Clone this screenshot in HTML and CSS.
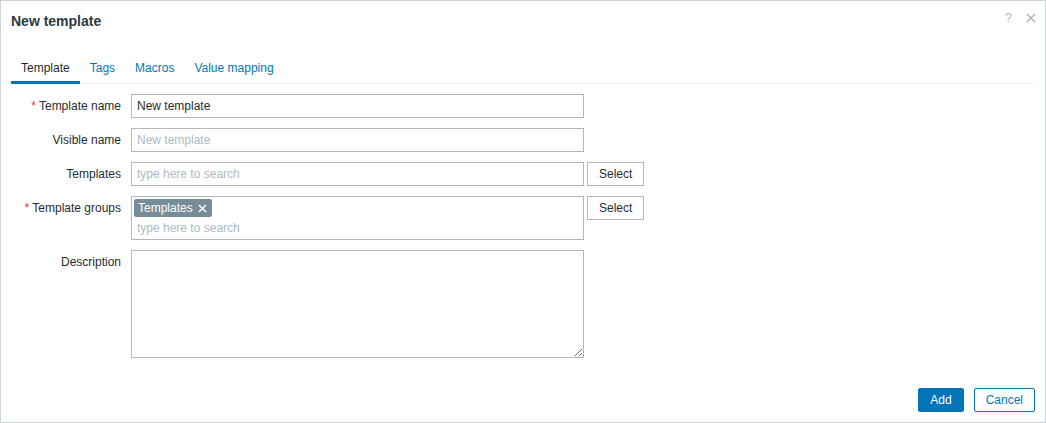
FILE: index.html
```html
<!DOCTYPE html>
<html>
<head>
<meta charset="utf-8">
<link rel="stylesheet" href="styles.css">
</head>
<body>
<div class="dialog">
  <div class="header">
    <h4 class="title">New template</h4>
    <div class="header-tools">
      <span class="help">?</span>
      <svg class="close" width="10" height="10" viewBox="0 0 10 10"><path d="M1 1L9 9M9 1L1 9" stroke="#acbbc2" stroke-width="1.6" fill="none"/></svg>
    </div>
  </div>
  <ul class="tabs">
    <li class="tab active">Template</li>
    <li class="tab">Tags</li>
    <li class="tab">Macros</li>
    <li class="tab">Value mapping</li>
  </ul>
  <div class="form">
    <label class="label required">Template name</label>
    <div class="field"><input class="text" type="text" value="New template"></div>

    <label class="label">Visible name</label>
    <div class="field"><input class="text" type="text" placeholder="New template"></div>

    <label class="label">Templates</label>
    <div class="field"><input class="text" type="text" placeholder="type here to search"><button class="btn-alt">Select</button></div>

    <label class="label required">Template groups</label>
    <div class="field">
      <div class="multiselect">
        <div class="selected">
          <span class="tag">Templates<svg width="9" height="9" viewBox="0 0 9 9"><path d="M1 1L8 8M8 1L1 8" stroke="#fff" stroke-width="1.5" fill="none"/></svg></span>
        </div>
        <input class="ms-input" type="text" placeholder="type here to search">
      </div>
      <button class="btn-alt">Select</button>
    </div>

    <label class="label">Description</label>
    <div class="field"><textarea class="textarea"></textarea></div>
  </div>
  <div class="footer">
    <button class="btn-primary">Add</button>
    <button class="btn-secondary">Cancel</button>
  </div>
</div>
</body>
</html>
```

FILE: styles.css
```css
html, body {
  margin: 0;
  padding: 0;
  background: #fff;
}

.dialog {
  box-sizing: border-box;
  width: 1046px;
  height: 423px;
  border: 1px solid #ccd5d9;
  display: flex;
  flex-direction: column;
  background: #fff;
  font-family: "Liberation Sans", Arial, sans-serif;
  font-size: 12px;
  color: #1f2c33;
}

.header {
  box-sizing: border-box;
  height: 54px;
  padding: 11px 10px 0 10px;
  display: flex;
  justify-content: space-between;
  align-items: flex-start;
}

.title {
  margin: 0;
  font-size: 14px;
  font-weight: bold;
  line-height: 18px;
  color: #2b3a42;
}

.header-tools {
  display: flex;
  align-items: center;
  gap: 14px;
  margin-top: -3px;
  margin-right: -1px;
}

.help {
  font-size: 13px;
  line-height: 18px;
  color: #acbbc2;
}

.close {
  display: block;
}

.tabs {
  list-style: none;
  margin: 0 10px;
  padding: 0;
  display: flex;
  border-bottom: 1px solid #ebeef0;
}

.tab {
  padding: 6px 10px;
  line-height: 14px;
  color: #0275b8;
  border-bottom: 3px solid transparent;
  margin-bottom: -1px;
}

.tab.active {
  color: #1f2c33;
  border-bottom-color: #0275b8;
}

.form {
  margin: 10px 10px 0;
  display: grid;
  grid-template-columns: 110px 1fr;
  column-gap: 10px;
  row-gap: 10px;
}

.label {
  text-align: right;
  line-height: 24px;
  white-space: nowrap;
}

.label.required::before {
  content: "*";
  color: #e33734;
  margin-right: 3px;
}

.field {
  display: flex;
  align-items: flex-start;
  gap: 3px;
}

.text {
  box-sizing: border-box;
  width: 453px;
  height: 24px;
  margin: 0;
  padding: 0 5px;
  border: 1px solid #acbbc2;
  border-radius: 0;
  font-family: inherit;
  font-size: 12px;
  color: #1f2c33;
  background: #fff;
  outline: none;
}

.text::placeholder,
.ms-input::placeholder {
  color: #acbbc2;
  opacity: 1;
}

.btn-alt {
  box-sizing: border-box;
  height: 24px;
  margin: 0;
  padding: 0 11px;
  border: 1px solid #acbbc2;
  border-radius: 0;
  background: #fff;
  color: #1f2c33;
  font-family: inherit;
  font-size: 12px;
  line-height: 22px;
}

.multiselect {
  box-sizing: border-box;
  width: 453px;
  height: 44px;
  border: 1px solid #acbbc2;
  display: flex;
  flex-direction: column;
}

.selected {
  display: flex;
  padding: 2px 0 0 2px;
}

.tag {
  display: inline-flex;
  align-items: center;
  gap: 5px;
  height: 18px;
  line-height: 18px;
  padding: 0 5px 0 4px;
  background: #768d99;
  color: #fff;
  border-radius: 2px;
}

.ms-input {
  box-sizing: border-box;
  width: 100%;
  height: 20px;
  margin: 1px 0 0;
  padding: 0 5px;
  border: 0;
  font-family: inherit;
  font-size: 12px;
  line-height: 20px;
  color: #1f2c33;
  background: transparent;
  outline: none;
}

.textarea {
  box-sizing: border-box;
  width: 453px;
  height: 108px;
  margin: 0;
  padding: 4px 5px;
  border: 1px solid #acbbc2;
  border-radius: 0;
  font-family: inherit;
  font-size: 12px;
  display: block;
  outline: none;
}

.footer {
  margin-top: auto;
  padding: 10px;
  display: flex;
  justify-content: flex-end;
  gap: 10px;
}

.btn-primary,
.btn-secondary {
  box-sizing: border-box;
  height: 24px;
  margin: 0;
  padding: 0 11px;
  border: 1px solid #0275b8;
  border-radius: 2px;
  font-family: inherit;
  font-size: 12px;
  line-height: 22px;
}

.btn-primary {
  background: #0275b8;
  color: #fff;
}

.btn-secondary {
  background: #fff;
  color: #0275b8;
}
```
